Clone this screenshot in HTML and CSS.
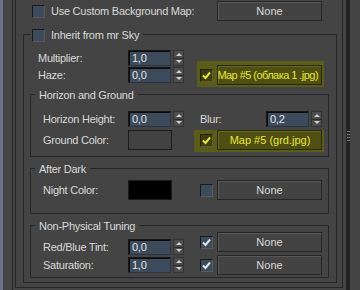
FILE: index.html
```html
<!DOCTYPE html>
<html lang="en">
<head>
  <meta charset="UTF-8">
  <title>mr Physical Sky</title>
  <link rel="stylesheet" href="styles.css">
</head>
<body>
  <div class="side"></div>
  <div class="frame">
    <div class="rollout">
      <div class="top-row">
        <span class="box"></span>
        <span class="caption">Use Custom Background Map:</span>
        <button class="btn">None</button>
      </div>

      <div class="group sky">
        <div class="legend"><span class="box"></span>Inherit from mr Sky</div>
        <div class="row first">
          <span class="lbl">Multiplier:</span><span class="num">1,0</span><span class="spin"></span>
        </div>
        <div class="row">
          <span class="lbl">Haze:</span><span class="num">0,0</span><span class="spin"></span>
          <div class="pick hl hl-sky">
            <span class="box on"><svg width="11" height="11" viewBox="0 0 11 11"><path d="M2 5.5 L4.5 8 L9 2.5" /></svg></span>
            <button class="btn"><span>Map #5 (облака 1 .jpg)</span></button>
          </div>
        </div>

        <div class="group sub horizon">
          <div class="legend">Horizon and Ground</div>
          <div class="row first">
            <span class="lbl">Horizon Height:</span><span class="num">0,0</span><span class="spin"></span>
            <div class="blur">
              <span class="lbl">Blur:</span><span class="num">0,2</span><span class="spin"></span>
            </div>
          </div>
          <div class="row tall">
            <span class="lbl">Ground Color:</span><span class="swatch"></span>
            <div class="pick hl hl-grd">
              <span class="box on"><svg width="11" height="11" viewBox="0 0 11 11"><path d="M2 5.5 L4.5 8 L9 2.5" /></svg></span>
              <button class="btn"><span>Map #5 (grd.jpg)</span></button>
            </div>
          </div>
        </div>

        <div class="group sub dark">
          <div class="legend">After Dark</div>
          <div class="row tall first">
            <span class="lbl">Night Color:</span><span class="swatch night"></span>
            <div class="pick">
              <span class="box"></span>
              <button class="btn">None</button>
            </div>
          </div>
        </div>

        <div class="group sub tuning">
          <div class="legend">Non-Physical Tuning</div>
          <div class="cols">
            <div class="col-left">
              <div class="row">
                <span class="lbl">Red/Blue Tint:</span><span class="num">0,0</span><span class="spin"></span>
              </div>
              <div class="row">
                <span class="lbl">Saturation:</span><span class="num">1,0</span><span class="spin"></span>
              </div>
            </div>
            <div class="col-right">
              <div class="pick">
                <span class="box on"><svg width="11" height="11" viewBox="0 0 11 11"><path d="M2 5.5 L4.5 8 L9 2.5" /></svg></span>
                <button class="btn">None</button>
              </div>
              <div class="pick">
                <span class="box on"><svg width="11" height="11" viewBox="0 0 11 11"><path d="M2 5.5 L4.5 8 L9 2.5" /></svg></span>
                <button class="btn">None</button>
              </div>
            </div>
          </div>
        </div>
      </div>
    </div>
  </div>
  <div class="scroll"><span class="grip"></span></div>
</body>
</html>
```

FILE: styles.css
```css
* {
  box-sizing: border-box;
}
body {
  margin: 0;
  height: 290px;
  overflow: hidden;
  display: flex;
  background: #444444;
  color: #d9d9d9;
  font-family: "Liberation Sans", Arial, sans-serif;
  font-size: 11px;
  letter-spacing: -0.25px;
}
.side {
  width: 3px;
  background: #6b6f88;
}
.frame {
  margin-left: 9px;
  padding-left: 2px;
  border-left: 1px solid #262626;
}
.rollout {
  width: 328px;
  padding: 1px 0 4px;
  border: 1px solid #262626;
  border-top: none;
}
.scroll {
  width: 4px;
  margin-left: 3px;
  padding-top: 131px;
  background: #232323;
}
.grip {
  display: block;
  width: 3px;
  height: 10px;
  margin-left: 1px;
  background: repeating-linear-gradient(#7a7a7a 0 1px, transparent 1px 3px);
}

/* top row */
.top-row {
  display: flex;
  align-items: center;
  height: 20px;
  padding: 0 20px 0 16px;
}
.caption {
  margin-left: 6px;
  flex: 1;
}

/* group boxes */
.group {
  border: 1px solid #262626;
}
.sky {
  margin: 13px 5px 0 7px;
  padding-bottom: 4px;
}
.sub {
  margin: 11px 7px 0 6px;
}
.legend {
  display: flex;
  align-items: center;
  width: fit-content;
  height: 14px;
  margin: -7px 0 0 4px;
  padding: 0 4px;
  background: #444444;
}
.sky > .legend {
  margin-left: 7px;
  padding-left: 1px;
  gap: 6px;
}

/* rows */
.row {
  display: flex;
  align-items: center;
  height: 16px;
}
.sky > .row {
  padding: 0 14px;
  margin-top: 1px;
}
.sky > .row.first {
  margin-top: 8px;
}
.sub .row {
  padding: 0 6px 0 12px;
}
.lbl {
  width: 90px;
  flex-shrink: 0;
}
.sub .lbl {
  width: 85px;
}
.horizon {
  padding-bottom: 6px;
}
.horizon .row.first {
  margin-top: 9px;
}
.horizon .row.tall {
  margin-top: 3px;
}
.row.tall {
  height: 20px;
}
.dark {
  padding-bottom: 13px;
}
.dark .row.first {
  margin-top: 4px;
}

/* controls */
.num {
  width: 43px;
  height: 16px;
  padding: 1px 0 0 3px;
  line-height: 13px;
  background: #3c4b5c;
  border: 1px solid #161616;
  border-right-color: #2c3440;
  border-bottom-color: #2c3440;
  box-shadow: inset 1px 1px 0 #0c0c0c;
  color: #e2e2e2;
}
.spin {
  width: 11px;
  height: 16px;
  margin-left: 2px;
  display: flex;
  flex-direction: column;
  align-items: center;
  justify-content: space-around;
  background: linear-gradient(#4c4c4c 0 7px, #2c2c2c 7px 8px, #4c4c4c 8px);
  border: 1px solid #333;
}
.spin::before {
  content: "";
  border: 3px solid transparent;
  border-top: 0;
  border-bottom: 3px solid #cfcfcf;
}
.spin::after {
  content: "";
  border: 3px solid transparent;
  border-bottom: 0;
  border-top: 3px solid #cfcfcf;
}
.swatch {
  width: 44px;
  height: 20px;
  background: #424242;
  border: 1px solid #1c1c1c;
}
.swatch.night {
  background: #000;
}
.box {
  width: 13px;
  height: 13px;
  flex-shrink: 0;
  display: flex;
  background: #3c4b5c;
  border: 1px solid #1a1a1a;
  border-right-color: #5a5a5a;
  border-bottom-color: #5a5a5a;
}
.box svg path {
  fill: none;
  stroke: #e4e4e4;
  stroke-width: 2;
}
.btn {
  width: 105px;
  height: 20px;
  padding: 0 4px;
  display: flex;
  align-items: center;
  justify-content: center;
  overflow: hidden;
  white-space: nowrap;
  font: inherit;
  color: #d9d9d9;
  background: #434343;
  border: 1px solid #262626;
  box-shadow: inset 1px 1px 0 #575757;
}
.btn span {
  flex-shrink: 0;
}
.pick {
  display: flex;
  align-items: center;
  gap: 4px;
  margin-left: auto;
}
.blur {
  display: flex;
  align-items: center;
  margin-left: auto;
}
.blur .lbl {
  width: 66px;
}

/* non-physical tuning */
.tuning {
  padding-bottom: 2px;
}
.cols {
  display: flex;
  align-items: flex-start;
}
.col-left {
  margin-top: 6px;
  display: flex;
  flex-direction: column;
  gap: 2px;
}
.col-right {
  margin: -1px 6px 0 auto;
  display: flex;
  flex-direction: column;
  gap: 3px;
}
.tuning .row {
  padding-right: 0;
}

/* yellow marker over the map slots */
.hl {
  background: #5b5b1a;
}
.hl-sky {
  margin: -4px -2px -2px auto;
  padding: 4px 2px 2px 3px;
}
.hl-grd {
  margin: 0 -2px -2px auto;
  padding: 0 2px 2px 6px;
}
.hl .btn {
  justify-content: flex-end;
  padding-right: 3px;
  color: #e6e63c;
  background: #4f4f12;
  border-color: #2a2a06;
  box-shadow: inset 1px 1px 0 #65652a;
}
.hl-sky .btn span {
  letter-spacing: -0.55px;
}
.hl-grd .btn {
  justify-content: center;
}
.hl .box {
  background: #3e3e12;
  border-color: #222205 #5e5e2a #5e5e2a #222205;
}
.hl .box svg path {
  stroke: #e6e63c;
}
```
